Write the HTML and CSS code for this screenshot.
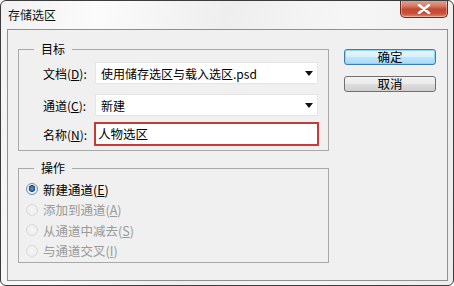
FILE: index.html
```html
<!DOCTYPE html>
<html lang="zh-CN">
<head>
<meta charset="utf-8">
<title>存储选区</title>
<link rel="stylesheet" href="styles.css">
</head>
<body>
<div class="window">
  <div class="titlebar">
    <span class="title">存储选区</span>
    <div class="close"><svg width="14" height="10" viewBox="0 0 14 10"><path d="M2 1 L12 9 M12 1 L2 9" stroke="#fff" stroke-width="2.6" stroke-linecap="round"/></svg></div>
  </div>
  <div class="client">
    <div class="groups">
      <fieldset class="group target">
        <legend>目标</legend>
        <div class="row r1">
          <span class="label">文档(<u>D</u>):</span>
          <div class="select"><span>使用储存选区与载入选区.psd</span><i class="arrow"></i></div>
        </div>
        <div class="row r2">
          <span class="label">通道(<u>C</u>):</span>
          <div class="select"><span>新建</span><i class="arrow"></i></div>
        </div>
        <div class="row r3">
          <span class="label">名称(<u>N</u>):</span>
          <div class="input">人物选区</div>
        </div>
      </fieldset>
      <fieldset class="group ops">
        <legend>操作</legend>
        <div class="radio-row"><span class="radio checked"></span><span>新建通道(<u>E</u>)</span></div>
        <div class="radio-row disabled"><span class="radio"></span><span>添加到通道(<u>A</u>)</span></div>
        <div class="radio-row disabled"><span class="radio"></span><span>从通道中减去(<u>S</u>)</span></div>
        <div class="radio-row disabled"><span class="radio"></span><span>与通道交叉(<u>I</u>)</span></div>
      </fieldset>
    </div>
    <div class="buttons">
      <div class="btn default">确定</div>
      <div class="btn">取消</div>
    </div>
  </div>
</div>
</body>
</html>
```
FILE: styles.css
```css
* { box-sizing: border-box; }
html, body { margin: 0; padding: 0; background: #ffffff; }
body {
  font-family: "Noto Sans CJK SC", "Noto Sans", sans-serif;
  font-size: 12px;
  color: #000;
}
.window {
  width: 454px;
  height: 286px;
  border: 1px solid #3c3c3c;
  border-radius: 6px;
  background: linear-gradient(100deg, #f2f2f2 0%, #fbfbfb 20%, #eeeeee 45%, #f6f6f6 70%, #ececec 100%);
  display: flex;
  flex-direction: column;
  overflow: hidden;
}
.titlebar {
  height: 28px;
  display: flex;
  align-items: flex-start;
  padding-left: 7px;
  padding-right: 5px;
}
.title {
  line-height: 16px;
  margin-top: 6px;
  font-size: 12px;
  color: #111;
}
.close {
  margin-left: auto;
  width: 48px;
  height: 18px;
  margin-top: -1px;
  border: 1px solid #6e2a1e;
  border-top: none;
  border-radius: 0 0 5px 5px;
  background: linear-gradient(#e6a598 0%, #d77a66 35%, #c4472f 55%, #c9533a 80%, #dc8a77 100%);
  display: flex;
  align-items: center;
  justify-content: center;
  box-shadow: inset 0 0 0 1px rgba(255,255,255,0.35);
}
.client {
  margin: 0 5px 4px 6px;
  height: 252px;
  border: 1px solid #8f9090;
  background: #f0f0f0;
  display: flex;
  padding: 11px 10px 0 10px;
}
.groups {
  width: 311px;
  display: flex;
  flex-direction: column;
}
.group {
  margin: 0;
  border: 1px solid #a8a8a8;
  border-radius: 0;
  min-width: 0;
}
.group legend {
  line-height: 16px;
  padding: 0 7px;
  font-size: 12px;
}
.target {
  padding: 0 9px 4px 24px;
}
.target legend { margin-left: -9px; }
.row {
  display: flex;
  align-items: center;
}
.r1 { margin-top: 5px; height: 22px; }
.r2 { margin-top: 10px; height: 22px; }
.r3 { margin-top: 6px; height: 24px; }
.label {
  width: 52px;
  flex: none;
  white-space: nowrap;
}
.select {
  width: 223px;
  height: 22px;
  background: #fff;
  border: 1px solid #e6e6e6;
  display: flex;
  align-items: center;
  padding-left: 5px;
  padding-right: 4px;
}
.select span { flex: 1; }
.arrow {
  width: 0;
  height: 0;
  border-left: 4px solid transparent;
  border-right: 4px solid transparent;
  border-top: 5px solid #111;
  margin-top: 1px;
}
.input {
  width: 225px;
  height: 24px;
  margin-left: -1px;
  background: #fff;
  border: 2px solid #c8393a;
  padding-left: 2px;
  line-height: 20px;
  font-size: 12.5px;
}
.ops {
  margin-top: 9px;
  padding: 3px 9px 1px 7px;
}
.ops legend { margin-left: 8px; }
.radio-row {
  height: 20.5px;
  display: flex;
  align-items: center;
  font-size: 12.5px;
}
.radio-row.disabled { color: #9a9a9a; }
.radio {
  width: 12px;
  height: 12px;
  border-radius: 50%;
  border: 1px solid #b9b9b9;
  background: radial-gradient(circle at 50% 40%, #ffffff 0%, #ececec 70%, #dedede 100%);
  margin-right: 5px;
  flex: none;
}
.radio-row.disabled .radio {
  border-color: #dadada;
  background: radial-gradient(circle, #f6f6f6 0%, #ebebeb 100%);
}
.radio.checked {
  border-color: #7d8a99;
  background: radial-gradient(circle at 50% 45%, #6fa2d8 0%, #2a5d9a 32%, #1d3f6e 42%, #e8eef5 48%, #f6f6f6 100%);
}
.buttons {
  margin-left: 15px;
  padding-top: 8px;
  display: flex;
  flex-direction: column;
  gap: 11px;
}
.btn {
  width: 92px;
  height: 16px;
  border: 1px solid #707070;
  border-radius: 3px;
  background: linear-gradient(#f2f2f2 0%, #ebebeb 48%, #dddddd 52%, #cfcfcf 100%);
  text-align: center;
  line-height: 14px;
  font-size: 12.5px;
}
.btn.default {
  border-color: #3c7fb1;
  background: linear-gradient(#eaf6fd 0%, #d9f0fc 48%, #bee6fd 52%, #a7d9f5 100%);
  box-shadow: inset 0 0 0 1px #8fd3f7;
}
```
